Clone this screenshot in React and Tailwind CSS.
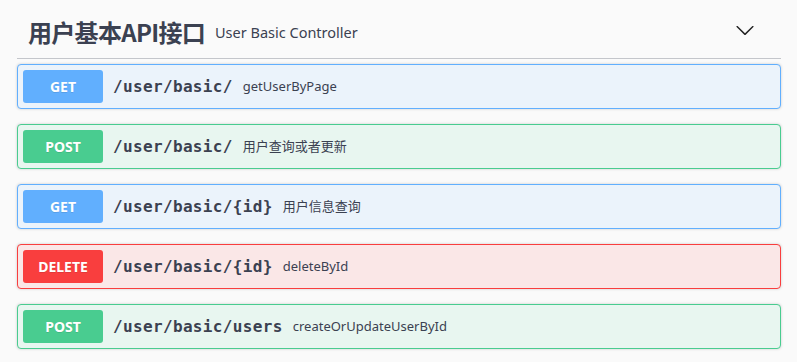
import React from 'react';

const ops = [
  { method: 'GET', path: '/user/basic/', summary: 'getUserByPage' },
  { method: 'POST', path: '/user/basic/', summary: '用户查询或者更新' },
  { method: 'GET', path: '/user/basic/{id}', summary: '用户信息查询' },
  { method: 'DELETE', path: '/user/basic/{id}', summary: 'deleteById' },
  { method: 'POST', path: '/user/basic/users', summary: 'createOrUpdateUserById' },
];

const styles = {
  GET: { block: 'border-[#61affe] bg-[#ebf3fb]', badge: 'bg-[#61affe]' },
  POST: { block: 'border-[#49cc90] bg-[#e8f6f0]', badge: 'bg-[#49cc90]' },
  DELETE: { block: 'border-[#f93e3e] bg-[#fae7e7]', badge: 'bg-[#f93e3e]' },
};

const sans = "font-['Noto_Sans','Noto_Sans_CJK_SC',sans-serif]";

const App = () => {
  return (
    <div className={`min-h-[362px] bg-[#fafafa] pl-[17px] pr-[16px] text-[#3b4151] ${sans}`}>
      {/* Tag header */}
      <div className="flex items-center justify-between h-[59px] pt-[6px] pl-[11px] pr-[26px] border-b border-[#c4c6cb] mb-[5px]">
        <div className="flex items-center">
          <h4 className="text-[24px] font-bold leading-none tracking-[-0.7px] font-['Noto_Sans_CJK_SC',sans-serif]">用户基本API接口</h4>
          <small className="text-[14.5px] px-[10px] pt-[2px]">User Basic Controller</small>
        </div>
        <svg width="20" height="20" viewBox="0 0 20 20" fill="#222" className="-mt-[4px]">
          <path d="M17.418 6.109c.272-.268.709-.268.979 0s.271.701 0 .969l-7.908 7.83c-.27.268-.707.268-.979 0l-7.908-7.83c-.27-.268-.27-.701 0-.969.271-.268.709-.268.979 0L10 13.25l7.418-7.141z" />
        </svg>
      </div>

      {/* Operations */}
      {ops.map((op, i) => (
        <div
          key={i}
          className={`border rounded-[4px] mb-[15px] shadow-[0_0_3px_rgba(0,0,0,0.19)] ${styles[op.method].block}`}
        >
          <div className="flex items-center p-[5px]">
            <span
              className={`min-w-[80px] rounded-[3px] py-[6px] text-center text-[14px] leading-[21px] font-bold text-white [text-shadow:0_1px_0_rgba(0,0,0,0.1)] ${styles[op.method].badge}`}
            >
              {op.method}
            </span>
            <span className="px-[10px] text-[16px] font-semibold tracking-[0.35px] font-['DejaVu_Sans_Mono',monospace]">
              {op.path}
            </span>
            <div className="text-[13px]">{op.summary}</div>
          </div>
        </div>
      ))}
    </div>
  );
};

export default App;
